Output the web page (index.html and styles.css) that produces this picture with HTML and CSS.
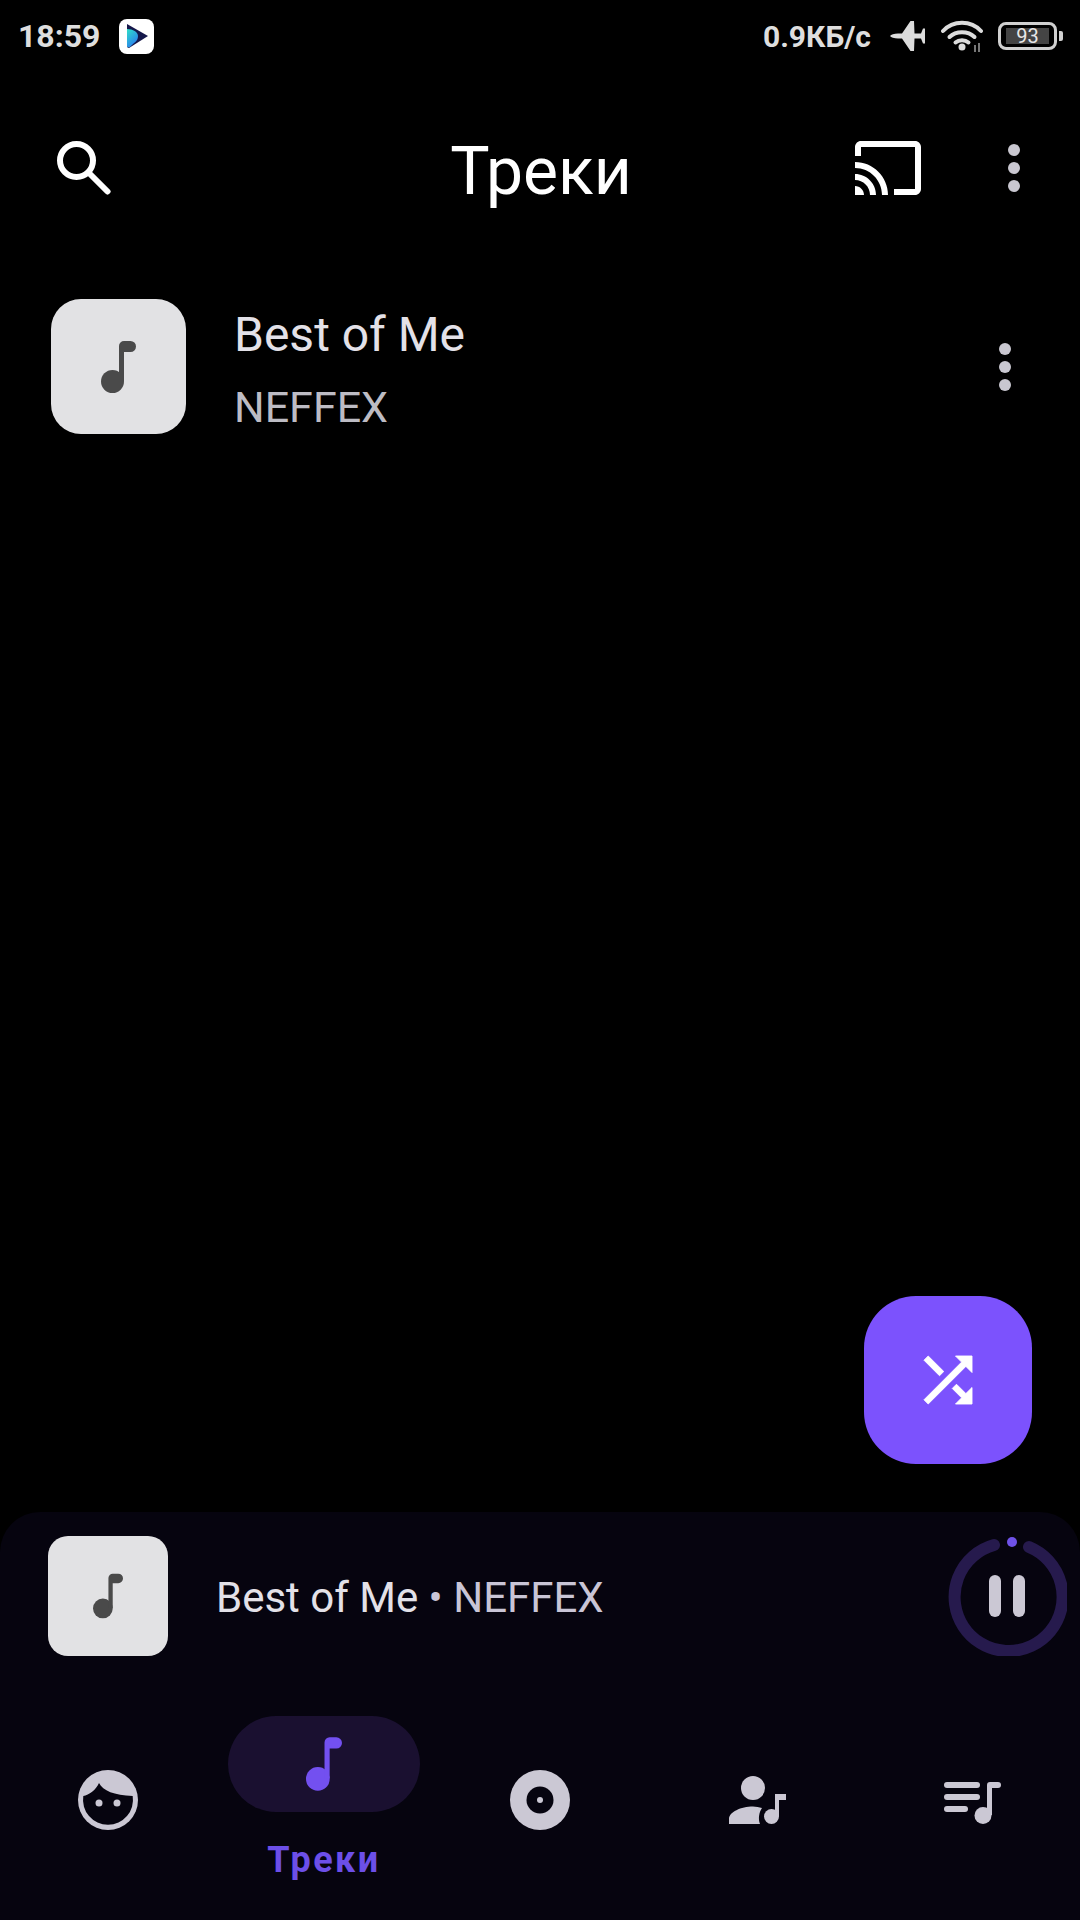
FILE: index.html
```html
<!DOCTYPE html>
<html lang="ru">
<head>
    <meta charset="UTF-8">
    <meta name="viewport" content="width=device-width, initial-scale=1.0">
    <title>Треки</title>
    <link rel="stylesheet" href="styles.css">
</head>
<body>
<div class="app">
    <!-- Статус-бар -->
    <div class="status-bar">
        <span class="status-time">18:59</span>
        <svg class="app-logo" width="35" height="35" viewBox="0 0 35 35">
            <defs>
                <linearGradient id="logoGrad" x1="0" y1="0" x2="0.6" y2="1">
                    <stop offset="0" stop-color="#2fe0c8"/>
                    <stop offset="1" stop-color="#2a7cf0"/>
                </linearGradient>
            </defs>
            <rect width="35" height="35" rx="8" fill="#fff"/>
            <path d="M8 5 L29 17 L10 29 Q8 29 8 27 Z" fill="#15174a"/>
            <path d="M8 10 C14 10 19 13 19 17 C19 23 14 24 11 28 Q8 29 8 27 Z" fill="url(#logoGrad)"/>
        </svg>
        <span class="status-right">
            <span class="status-text">0.9КБ/с</span>
            <svg class="plane" width="35" height="30" viewBox="0 0 35 30">
                <path d="M0 15 C1 13.500 4 12.500 8 12.500 L12 12.500 L20.500 0 L24 0 L24.500 12.500 L31 12.500 L33 7.500 L35 7.500 L35 22.500 L33 22.500 L31 17.500 L24.500 17.500 L24 30 L20.500 30 L12 17.500 L8 17.500 C4 17.500 1 16.500 0 15 Z" fill="#dcdcdc"/>
            </svg>
            <svg class="wifi" width="42" height="32" viewBox="0 0 42 32">
                <g fill="none" stroke="#dcdcdc" stroke-width="4" stroke-linecap="round">
                    <path d="M2 11 C12 0 30 0 40 11"/>
                    <path d="M8.500 17 C15 10.500 27 10.500 33.500 17"/>
                    <path d="M14.500 22.500 C18 19.500 24 19.500 27.500 22.500"/>
                </g>
                <circle cx="21" cy="27" r="3.500" fill="#dcdcdc"/>
                <path d="M34 25 V32 M38 23 V32" stroke="#777" stroke-width="2"/>
            </svg>
            <span class="battery">
                <span class="battery-body"><span class="battery-level">93</span></span>
                <span class="battery-tip"></span>
            </span>
        </span>
    </div>

    <!-- Заголовок -->
    <div class="toolbar">
        <div class="toolbar-left">
            <svg width="54" height="54" viewBox="0 0 54 54">
                <circle cx="19.500" cy="19.500" r="16.500" fill="none" stroke="#fff" stroke-width="6"/>
                <path d="M32 32 L50.500 50.500" stroke="#fff" stroke-width="6" stroke-linecap="round"/>
            </svg>
        </div>
        <h1 class="toolbar-title">Треки</h1>
        <div class="toolbar-right">
            <svg class="cast-icon" width="72" height="72" viewBox="0 0 24 24">
                <path fill="#fff" d="M21 3H3c-1.100 0-2 .9-2 2v3h2V5h18v14h-7v2h7c1.100 0 2-.9 2-2V5c0-1.100-.9-2-2-2zM1 18v3h3c0-1.660-1.340-3-3-3zm0-4v2c2.760 0 5 2.240 5 5h2c0-3.870-3.130-7-7-7zm0-4v2c4.970 0 9 4.030 9 9h2c0-6.080-4.930-11-11-11z"/>
            </svg>
            <span class="dots"><i></i><i></i><i></i></span>
        </div>
    </div>

    <!-- Список треков -->
    <div class="track-row">
        <div class="cover cover-big">
            <svg width="35" height="52" viewBox="0 0 35 52">
                <circle cx="11.500" cy="40.500" r="11.500" fill="#4a4a4a"/>
                <path fill="#4a4a4a" d="M18 40 V5 A5 5 0 0 1 23 0 H29.500 A5.500 5.500 0 0 1 29.500 11 H23 V40 Z"/>
            </svg>
        </div>
        <div class="track-info">
            <div class="track-title">Best of Me</div>
            <div class="track-artist">NEFFEX</div>
        </div>
        <span class="dots"><i></i><i></i><i></i></span>
    </div>

    <div class="spacer"></div>

    <button class="fab">
        <svg width="72" height="72" viewBox="0 0 24 24">
            <path fill="#fff" stroke="#fff" stroke-width=".3" stroke-linejoin="round" d="M10.590 9.170L5.410 4 4 5.410l5.170 5.170 1.420-1.410zM14.500 4l2.040 2.040L4 18.590 5.410 20 17.960 7.460 20 9.500V4h-5.500zm.33 9.410l-1.410 1.410 3.130 3.130L14.500 20H20v-5.500l-2.040 2.040-3.130-3.130z"/>
        </svg>
    </button>

    <!-- Нижняя панель -->
    <div class="bottom-panel">
        <div class="mini-player">
            <div class="cover cover-small">
                <svg width="30" height="46" viewBox="0 0 35 52">
                    <circle cx="11.500" cy="40.500" r="11.500" fill="#4a4a4a"/>
                    <path fill="#4a4a4a" d="M18 40 V5 A5 5 0 0 1 23 0 H29.500 A5.500 5.500 0 0 1 29.500 11 H23 V40 Z"/>
                </svg>
            </div>
            <div class="mini-text">Best of Me<span class="mini-artist"> • NEFFEX</span></div>
            <svg class="ring" width="120" height="120" viewBox="0 0 120 120">
                <path d="M47 9 A54 54 0 1 0 82 11" fill="none" stroke="#261a4d" stroke-width="12" stroke-linecap="round"/>
                <circle cx="65" cy="6" r="5" fill="#6f52e8"/>
                <rect x="42" y="39" width="12" height="42" rx="6" fill="#cbc8d4"/>
                <rect x="66" y="39" width="12" height="42" rx="6" fill="#cbc8d4"/>
            </svg>
        </div>

        <nav class="nav">
            <div class="nav-item">
                <svg width="60" height="60" viewBox="0 0 60 60">
                    <circle cx="30" cy="30" r="30" fill="#cbc8d4"/>
                    <path fill="#06040f" d="M5.300 26 C11 25 18 20 21 13 C25 21 36 25 54.700 26 A25 25 0 1 1 5.300 26 Z"/>
                    <circle cx="21" cy="33" r="3.500" fill="#cbc8d4"/>
                    <circle cx="39" cy="33" r="3.500" fill="#cbc8d4"/>
                </svg>
            </div>
            <div class="nav-item nav-item-active">
                <div class="nav-pill">
                    <svg width="36" height="54" viewBox="0 0 35 52">
                        <circle cx="11.500" cy="40.500" r="11.500" fill="#7350f0"/>
                        <path fill="#7350f0" d="M18 40 V5 A5 5 0 0 1 23 0 H29.500 A5.500 5.500 0 0 1 29.500 11 H23 V40 Z"/>
                    </svg>
                </div>
                <span class="nav-label">Треки</span>
            </div>
            <div class="nav-item">
                <svg width="60" height="60" viewBox="0 0 60 60">
                    <circle cx="30" cy="30" r="30" fill="#cbc8d4"/>
                    <circle cx="30" cy="30" r="13.500" fill="#06040f"/>
                    <circle cx="30" cy="30" r="3" fill="#cbc8d4"/>
                </svg>
            </div>
            <div class="nav-item">
                <svg class="artist-icon" width="57" height="48" viewBox="0 0 57 48">
                    <circle cx="24" cy="12" r="12" fill="#cbc8d4"/>
                    <path fill="#cbc8d4" d="M0 48 V43 C0 36 12 30.500 24 30.500 C27 30.500 30 31 33 32 C30 36 29 43 31 48 Z"/>
                    <circle cx="42.500" cy="40.500" r="7.500" fill="#cbc8d4"/>
                    <path fill="#cbc8d4" d="M46 40 V18 H57 V24 H50 V40 Z"/>
                </svg>
            </div>
            <div class="nav-item">
                <svg class="playlist-icon" width="57" height="42" viewBox="0 0 57 42">
                    <g fill="#cbc8d4">
                        <rect x="0" y="0" width="36" height="6" rx="3"/>
                        <rect x="0" y="12" width="36" height="6" rx="3"/>
                        <rect x="0" y="24" width="24" height="6" rx="3"/>
                        <circle cx="39" cy="33.500" r="8.500"/>
                        <path d="M43 33 V3 A3 3 0 0 1 46 0 H54 A3 3 0 0 1 54 6 H48 V33 Z"/>
                    </g>
                </svg>
            </div>
        </nav>
    </div>
</div>
</body>
</html>
```

FILE: styles.css
```css
body {
    margin: 0;
    background-color: #000;
    font-family: "Roboto", "Liberation Sans", sans-serif;
}
.app {
    width: 1080px;
    height: 1920px;
    display: flex;
    flex-direction: column;
    overflow: hidden;
    background-color: #000;
}
.status-bar {
    height: 72px;
    display: flex;
    align-items: center;
    padding: 0 17px 0 18px;
    box-sizing: border-box;
}
.status-time {
    font-size: 32px;
    font-weight: 700;
    color: #dedede;
}
.status-text {
    font-size: 30px;
    font-weight: 700;
    color: #dedede;
}
.app-logo {
    margin-left: 19px;
}
.status-right {
    margin-left: auto;
    display: flex;
    align-items: center;
}
.plane {
    margin-left: 19px;
}
.wifi {
    margin-left: 16px;
}
.battery {
    margin-left: 15px;
    display: flex;
    align-items: center;
}
.battery-body {
    width: 59px;
    height: 28px;
    box-sizing: border-box;
    border: 3px solid #d0d0d0;
    border-radius: 8px;
    display: flex;
    align-items: center;
    justify-content: center;
}
.battery-level {
    width: 43px;
    height: 16px;
    background-color: #444;
    color: #e8e8e8;
    font-size: 20px;
    line-height: 16px;
    text-align: center;
}
.battery-tip {
    width: 4px;
    height: 10px;
    margin-left: 2px;
    background-color: #d0d0d0;
    border-radius: 0 2px 2px 0;
}
.toolbar {
    height: 192px;
    display: grid;
    grid-template-columns: 1fr auto 1fr;
    align-items: center;
    padding: 0 60px 0 57px;
}
.toolbar-left {
    display: flex;
}
.toolbar-title {
    margin: 0;
    padding: 7px 0 0 5px;
    font-size: 66px;
    font-weight: 400;
    color: #fff;
}
.toolbar-right {
    display: flex;
    align-items: center;
    justify-content: flex-end;
}
.cast-icon {
    margin-right: 84px;
}
.dots {
    display: flex;
    flex-direction: column;
    gap: 6px;
}
.dots i {
    display: block;
    width: 12px;
    height: 12px;
    border-radius: 50%;
    background-color: #c9c7d0;
}
.track-row {
    margin-top: 35px;
    padding: 0 69px 0 51px;
    display: flex;
    align-items: center;
}
.cover {
    display: flex;
    align-items: center;
    justify-content: center;
    background-color: #e2e2e4;
    flex-shrink: 0;
}
.cover-big {
    width: 135px;
    height: 135px;
    border-radius: 30px;
}
.cover-small {
    width: 120px;
    height: 120px;
    border-radius: 20px;
}
.track-info {
    margin-left: 48px;
    padding-top: 3px;
    flex: 1;
}
.track-title {
    font-size: 48px;
    color: #e3e1e8;
    line-height: 62px;
}
.track-artist {
    font-size: 43px;
    color: #bdbcc4;
    line-height: 50px;
    margin-top: 16px;
}
.spacer {
    flex: 1;
}
.fab {
    align-self: flex-end;
    width: 168px;
    height: 168px;
    margin: 0 48px 48px 0;
    padding: 0;
    border: none;
    border-radius: 52px;
    background-color: #7c52fd;
    display: flex;
    align-items: center;
    justify-content: center;
}
.bottom-panel {
    height: 408px;
    box-sizing: border-box;
    padding-top: 24px;
    background-color: #06040f;
    border-radius: 40px 40px 0 0;
}
.mini-player {
    display: flex;
    align-items: center;
    padding: 0 13px 0 48px;
}
.mini-text {
    margin-left: 48px;
    padding-top: 2px;
    flex: 1;
    font-size: 42px;
    color: #e3e1e8;
}
.mini-artist {
    color: #c9c5d6;
}
.nav {
    margin-top: 60px;
    display: flex;
}
.nav-item {
    width: 216px;
    height: 204px;
    padding-top: 54px;
    box-sizing: border-box;
    display: flex;
    flex-direction: column;
    align-items: center;
}
.nav-item-active {
    padding-top: 0;
}
.nav-pill {
    width: 192px;
    height: 96px;
    border-radius: 48px;
    background-color: #1a1030;
    display: flex;
    align-items: center;
    justify-content: center;
}
.nav-label {
    margin-top: 27px;
    font-size: 36px;
    font-weight: 700;
    letter-spacing: 2.5px;
    color: #6c4fe8;
}
.artist-icon {
    margin-top: 6px;
    margin-left: 2px;
}
.playlist-icon {
    margin-top: 12px;
    margin-left: 1px;
}
```
